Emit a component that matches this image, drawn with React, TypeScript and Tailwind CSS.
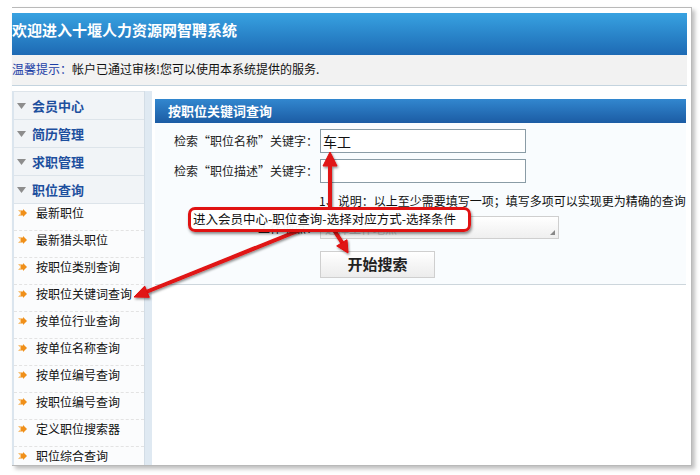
import React from 'react';

const font = { fontFamily: '"Noto Sans CJK SC", "Liberation Sans", sans-serif' };

const menuGroups = ['会员中心', '简历管理', '求职管理', '职位查询'];

const subItems = [
  '最新职位',
  '最新猎头职位',
  '按职位类别查询',
  '按职位关键词查询',
  '按单位行业查询',
  '按单位名称查询',
  '按单位编号查询',
  '按职位编号查询',
  '定义职位搜索器',
  '职位综合查询',
];

const GrayTriangle = () => (
  <svg width="9" height="6" viewBox="0 0 9 6" className="shrink-0">
    <polygon points="0,0 9,0 4.5,6" fill="#8d8d8d" />
  </svg>
);

const OrangeArrow = () => (
  <svg width="9" height="8" viewBox="0 0 9 8" className="shrink-0">
    <polygon points="0,1 2.5,1 5,4 2.5,7 0,7 2.5,4" fill="#f7c27a" />
    <polygon points="3,1.5 5,1.5 5,0 9,4 5,8 5,6.5 3,6.5" fill="#f0901a" />
  </svg>
);

const Sidebar = () => (
  <div className="w-[133px] shrink-0 flex flex-col bg-[#fbfcfd] border-l-2 border-[#dbe5ee] border-r border-r-[#d3dde6] overflow-hidden">
    <div className="h-[5px] bg-[#eef2f5] border-b border-[#dde4ea]" />
    {menuGroups.map((g) => (
      <div key={g} className="h-[28px] shrink-0 flex items-center gap-[6px] pl-[3px] bg-[#f1f4f7] border-b border-[#dde4ea]">
        <GrayTriangle />
        <span className="text-[13px] font-bold text-[#1d4f9e]">{g}</span>
      </div>
    ))}
    {subItems.map((s) => (
      <div key={s} className="h-[27px] shrink-0 flex items-start pt-px gap-[9px] pl-[4px] border-b border-dashed border-[#e3e3e3]">
        <span className="mt-[4px]"><OrangeArrow /></span>
        <span className="text-[12px] leading-[16px] text-[#111]">{s}</span>
      </div>
    ))}
  </div>
);

const FormRow = ({ label, children }: { label: string; children: React.ReactNode }) => (
  <div className="flex items-center">
    <div className="w-[165px] text-right text-[12px] text-[#222] pr-[2px]">{label}</div>
    {children}
  </div>
);

const Content = () => (
  <div className="flex-1 flex flex-col pl-[3px] pr-[2px] pt-[8px] bg-white">
    <div className="bg-[#f9fcfe] flex flex-col">
      <div className="h-[24px] flex items-center pl-[13px] bg-gradient-to-b from-[#3287cf] to-[#1c5ca4]">
        <span className="text-[13px] font-bold text-white">按职位关键词查询</span>
      </div>
      <div className="flex flex-col pt-[6px]">
        <FormRow label="检索“职位名称”关键字：">
          <div className="w-[206px] h-[24px] border border-[#8a9ca6] bg-white flex items-center pl-[2px] text-[14px] text-[#111]">车工</div>
        </FormRow>
        <div className="mt-[6px]">
          <FormRow label="检索“职位描述”关键字：">
            <div className="w-[206px] h-[24px] border border-[#8a9ca6] bg-white" />
          </FormRow>
        </div>
        <div className="mt-[10px] pl-[164px] text-[12px] leading-[16px] text-[#111] whitespace-nowrap">
          1、说明：以上至少需要填写一项；填写多项可以实现更为精确的查询
        </div>
        <div className="mt-[7px]">
          <FormRow label="工作地点：">
            <div className="relative w-[239px] h-[23px] border border-[#cfcfcf] bg-gradient-to-b from-white to-[#efefef] flex items-end pb-[2px] pl-[4px] text-[12px] leading-[14px] text-[#c4c4c4]">
              选择工作地点
              <svg width="5" height="5" viewBox="0 0 5 5" className="absolute right-[3px] bottom-[3px]">
                <polygon points="5,0 5,5 0,5" fill="#888" />
              </svg>
            </div>
          </FormRow>
        </div>
        <div className="mt-[12px] pl-[165px]">
          <div className="w-[115px] h-[27px] border border-[#cfcfcf] bg-gradient-to-b from-white to-[#ececec] flex items-center justify-center text-[15px] font-bold text-[#222]">
            开始搜索
          </div>
        </div>
        <div className="mt-[6px] h-px bg-[#cdd6dc]" />
      </div>
    </div>
  </div>
);

const Annotation = () => (
  <>
    <svg width="700" height="475" className="absolute left-0 top-0 pointer-events-none">
      <defs>
        <filter id="sh" x="-20%" y="-20%" width="140%" height="140%">
          <feDropShadow dx="1" dy="1.5" stdDeviation="1" floodColor="#000" floodOpacity="0.45" />
        </filter>
      </defs>
      <g filter="url(#sh)" fill="#e01212" stroke="#e01212">
        <line x1="330" y1="210" x2="330" y2="163" strokeWidth="4" />
        <polygon points="330,152 323,166 337,166" strokeWidth="1" />
        <line x1="334" y1="230" x2="343" y2="244" strokeWidth="4" />
        <polygon points="348,253 347,239.7 336.7,245.9" strokeWidth="1" />
        <line x1="300" y1="230" x2="146" y2="292" strokeWidth="4" />
        <polygon points="134,297 149.3,297.3 144.7,286.1" strokeWidth="1" />
      </g>
    </svg>
    <div
      className="absolute left-[188px] top-[207px] w-[283px] h-[25px] border-[3px] border-[#e01212] rounded-[7px] bg-white/95 shadow-[1px_2px_3px_rgba(0,0,0,0.45)] flex items-center pl-[2px] text-[12.5px] text-[#111] whitespace-nowrap"
      style={font}
    >
      进入会员中心-职位查询-选择对应方式-选择条件
    </div>
  </>
);

export default function App() {
  return (
    <div className="relative w-[700px] h-[475px] bg-white overflow-hidden" style={font}>
      <div className="pt-[7px] pl-[12px]">
        <div className="w-[680px] h-[459px] border-t border-r border-b border-[#b9b9b9] shadow-[3px_3px_4px_rgba(0,0,0,0.25)] bg-white flex flex-col pt-[5px] pr-[4px] overflow-hidden">
          <div className="h-[42px] shrink-0 flex items-start pt-[8px] bg-gradient-to-b from-[#38a2e1] to-[#1e6ab4]">
            <span className="text-[15px] leading-[18px] font-bold text-white whitespace-nowrap">欢迎进入十堰人力资源网智聘系统</span>
          </div>
          <div className="h-[31px] shrink-0 flex items-center pb-[3px] bg-[#f2f2f2] border-b border-[#c4d4df] text-[12px] whitespace-nowrap">
            <span className="text-[#1b3fa6]">温馨提示：</span>
            <span className="text-[#111]">帐户已通过审核!您可以使用本系统提供的服务.</span>
          </div>
          <div className="flex-1 flex min-h-0 pt-[5px]">
            <Sidebar />
            <div className="w-[7px] shrink-0 bg-[#dfe9f2]" />
            <Content />
          </div>
        </div>
      </div>
      <Annotation />
    </div>
  );
}
